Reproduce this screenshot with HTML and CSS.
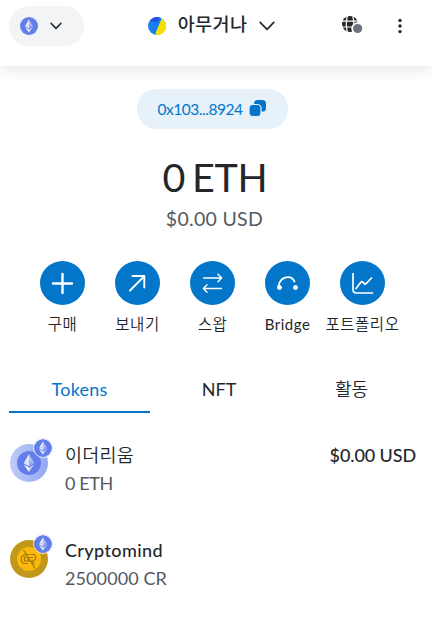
FILE: index.html
```html
<!DOCTYPE html>
<html lang="ko">
<head>
    <meta charset="UTF-8">
    <meta name="viewport" content="width=device-width, initial-scale=1.0">
    <title>Wallet</title>
    <link rel="stylesheet" href="styles.css">
</head>
<body>
    <!-- Shared ethereum logo -->
    <svg class="symbols" width="0" height="0">
        <symbol id="eth" viewBox="0 0 20 20">
            <circle cx="10" cy="10" r="10" fill="#627eea"/>
            <path d="M10 2.6 5.6 10.2 10 8.2z" fill="#fff" fill-opacity=".85"/>
            <path d="M10 2.6 14.4 10.2 10 8.2z" fill="#fff" fill-opacity=".5"/>
            <path d="M5.6 10.2 10 8.2v4.6z" fill="#fff" fill-opacity=".8"/>
            <path d="M14.4 10.2 10 8.2v4.6z" fill="#fff" fill-opacity=".35"/>
            <path d="M5.6 11.2 10 13.8v3.7z" fill="#fff" fill-opacity=".95"/>
            <path d="M14.4 11.2 10 13.8v3.7z" fill="#fff" fill-opacity=".6"/>
        </symbol>
    </svg>

    <header class="header">
        <button class="network">
            <svg width="18" height="18"><use href="#eth"/></svg>
            <svg width="12" height="8" viewBox="0 0 12 8" fill="none" stroke="#24272a" stroke-width="1.5" stroke-linecap="round" stroke-linejoin="round"><path d="M1 1.3 6 6.4 11 1.3"/></svg>
        </button>
        <button class="account">
            <svg width="18" height="18" viewBox="0 0 18 18">
                <circle cx="9" cy="9" r="9" fill="#1880f2"/>
                <path d="M1.5 4A9 9 0 0 1 12 .5L9.5 5.5z" fill="#2450e2"/>
                <path d="M13.8 1.4A9 9 0 0 1 8.5 17.99L7.5 16z" fill="#f5e000"/>
            </svg>
            <span class="account-name">아무거나</span>
            <svg width="16" height="10" viewBox="0 0 16 10" fill="none" stroke="#24272a" stroke-width="1.7" stroke-linecap="round" stroke-linejoin="round"><path d="M1.2 1.3 8 8.3l6.8-7"/></svg>
        </button>
        <div class="header-right">
            <svg width="21" height="18" viewBox="0 0 21 18">
                <circle cx="8" cy="8" r="8" fill="#24272a"/>
                <path d="M0 5.2h16M0 11h16M5.3 0Q3.3 8 5.3 16M10.8 0Q12.8 8 10.8 16" fill="none" stroke="#fff" stroke-width="1.2"/>
                <circle cx="15.6" cy="12.5" r="6.3" fill="#fff"/>
                <circle cx="15.6" cy="12.5" r="4.6" fill="#6a737d"/>
            </svg>
            <svg width="4" height="16" viewBox="0 0 4 16" fill="#24272a"><circle cx="2" cy="2.4" r="1.7"/><circle cx="2" cy="8" r="1.7"/><circle cx="2" cy="13.6" r="1.7"/></svg>
        </div>
    </header>

    <main class="main">
        <button class="address">
            <span>0x103...8924</span>
            <svg width="17" height="17" viewBox="0 0 17 17" fill="#0376c9">
                <rect x="5" y="0" width="12" height="11.5" rx="3.6"/>
                <rect x="0" y="4.5" width="12" height="12" rx="3.6" stroke="#e6f1fa" stroke-width="1.2"/>
            </svg>
        </button>

        <div class="balance">0 ETH</div>
        <div class="balance-usd">$0.00 USD</div>

        <div class="actions">
            <button class="action">
                <span class="action-icon"><svg width="45" height="44" viewBox="0 0 45 44"><path d="M22.5 13v19M13 22.5h19" stroke-width="2.4"/></svg></span>
                <span>구매</span>
            </button>
            <button class="action">
                <span class="action-icon"><svg width="45" height="44" viewBox="0 0 45 44"><path d="M15 29.5 29 15.5M17.5 15H29.3V26.5" stroke-width="1.9"/></svg></span>
                <span>보내기</span>
            </button>
            <button class="action">
                <span class="action-icon"><svg width="45" height="44" viewBox="0 0 45 44"><path d="M13.5 17h18M28 13.3l3.7 3.7-3.7 3.7M31.5 27.5h-18M17 23.8l-3.7 3.7 3.7 3.7" stroke-width="1.4"/></svg></span>
                <span>스왑</span>
            </button>
            <button class="action">
                <span class="action-icon"><svg width="45" height="44" viewBox="0 0 45 44"><path d="M13.500 25C15.500 14.500 26.500 14 29.500 20.500" stroke-width="1.8"/><circle cx="14.5" cy="26.5" r="2" fill="#fff"/><circle cx="30.5" cy="26.5" r="2" fill="#fff"/></svg></span>
                <span class="latin">Bridge</span>
            </button>
            <button class="action">
                <span class="action-icon"><svg width="45" height="44" viewBox="0 0 45 44"><path d="M13 12.5V28.5Q13 32 16.5 32H32.5M16 27.5l5-6.5q.8-.8 1.6 0l2 1.8q.8.7 1.5-.2L31.5 17" stroke-width="1.7"/></svg></span>
                <span>포트폴리오</span>
            </button>
        </div>

        <nav class="tabs">
            <button class="tab active">Tokens</button>
            <button class="tab">NFT</button>
            <button class="tab tab-korean">활동</button>
        </nav>

        <div class="token">
            <div class="token-icon token-eth">
                <svg width="24" height="24"><use href="#eth"/></svg>
                <svg class="badge" width="20" height="20"><use href="#eth"/></svg>
            </div>
            <div class="token-info">
                <div class="token-name">이더리움</div>
                <div class="token-amount amount-eth">0 ETH</div>
            </div>
            <div class="token-value">$0.00 USD</div>
        </div>

        <div class="token">
            <div class="token-icon token-cr">
                <svg width="38" height="38" viewBox="0 0 38 38">
                    <circle cx="19" cy="19" r="12" fill="#fbb90d"/>
                    <path d="M18 14.5h-3.5L11.5 17v4.500l2 2H18M17 17h-2.500v4H19M18.500 14.500H24l1.500 2v2.500l-2 2H18v-3.500h5M21 21l3.500 3M13.500 10 25 28.500" fill="none" stroke="#a87a0a" stroke-width="1.2"/>
                </svg>
                <svg class="badge" width="20" height="20"><use href="#eth"/></svg>
            </div>
            <div class="token-info">
                <div class="token-name name-cr">Cryptomind</div>
                <div class="token-amount">2500000 CR</div>
            </div>
        </div>
    </main>
</body>
</html>
```

FILE: styles.css
```css
* {
    margin: 0;
    padding: 0;
    box-sizing: border-box;
}

body {
    font-family: Lato, "Noto Sans CJK KR", sans-serif;
    background: #fff;
    color: #24272a;
    height: 620px;
    overflow: hidden;
}

button {
    font: inherit;
    color: inherit;
    background: none;
    border: none;
    cursor: pointer;
}

svg {
    display: block;
    flex-shrink: 0;
}

.symbols {
    display: none;
}

/* Header */
.header {
    height: 66px;
    padding: 6px 30px 20px 9px;
    display: grid;
    grid-template-columns: 75px 1fr 60px;
    box-shadow: 0 2px 16px rgba(0, 0, 0, 0.12);
}

.network {
    height: 40px;
    border-radius: 20px;
    background: #f2f4f6;
    display: flex;
    align-items: center;
    gap: 12px;
    padding-left: 11px;
}

.account {
    display: flex;
    align-items: center;
    padding-left: 64px;
}

.account-name {
    font-size: 18.5px;
    font-weight: 500;
    line-height: 24px;
    white-space: nowrap;
    width: 71px;
    margin: 0 11px 4px 11px;
    letter-spacing: 0.4px;
}

.header-right {
    display: flex;
    align-items: center;
    justify-content: space-between;
}

.header-right svg:first-child {
    margin-bottom: 3px;
}

/* Balance */
.main {
    padding: 23px 16px 0 9px;
    display: flex;
    flex-direction: column;
}

.address {
    width: 151px;
    height: 40px;
    margin-left: 128px;
    border-radius: 20px;
    background: #e6f1fa;
    color: #0376c9;
    font-size: 15.5px;
    display: flex;
    align-items: center;
    gap: 6px;
    padding: 0 0 1px 20px;
}

.address span {
    width: 86px;
    letter-spacing: -0.45px;
}

.balance {
    margin: 24px 0 0 5px;
    font-size: 39.5px;
    line-height: 48px;
    text-align: center;
    letter-spacing: -0.3px;
    word-spacing: -3px;
}

.balance-usd {
    margin: 6px 0 0 4px;
    font-size: 19.5px;
    line-height: 24px;
    text-align: center;
    letter-spacing: 0.3px;
    color: #535a61;
}

/* Action buttons */
.actions {
    display: grid;
    grid-template-columns: repeat(5, 75px);
    margin: 30px 0 0 16px;
}

.action {
    display: flex;
    flex-direction: column;
    align-items: center;
    gap: 8px;
    font-size: 15.5px;
    line-height: 22px;
    font-weight: 350;
    letter-spacing: 0.5px;
    white-space: nowrap;
}

.action .latin {
    font-size: 15px;
    font-weight: 400;
}

.action-icon {
    width: 45px;
    height: 44px;
    border-radius: 50%;
    background: #0376c9;
}

.action-icon svg {
    fill: none;
    stroke: #fff;
    stroke-linecap: round;
    stroke-linejoin: round;
}

/* Tabs */
.tabs {
    display: grid;
    grid-template-columns: 141px 138px 127px;
    margin-top: 32px;
}

.tab {
    height: 46px;
    font-size: 18px;
    line-height: 44px;
    border-bottom: 2px solid transparent;
}

.tab.active {
    color: #0376c9;
    border-color: #0376c9;
    letter-spacing: 0.2px;
}

.tab-korean {
    font-weight: 350;
}

/* Token list */
.token {
    height: 96px;
    padding-top: 28px;
    display: flex;
}

.token-icon {
    position: relative;
    width: 38px;
    height: 38px;
    margin: 3px 17px 0 1px;
    border-radius: 50%;
    display: flex;
    align-items: center;
    justify-content: center;
}

.token-eth {
    background: linear-gradient(90deg, #c0cbf7, #93a7f1);
}

.token-cr {
    background: #c2981b;
}

.badge {
    position: absolute;
    top: -6px;
    right: -5px;
    border: 1px solid #e4e8f5;
    border-radius: 50%;
}

.token-info {
    flex: 1;
}

.token-name {
    font-size: 18.5px;
    font-weight: 350;
    line-height: 28px;
    letter-spacing: 0.2px;
}

.name-cr {
    font-size: 18px;
    font-weight: 500;
    line-height: 27px;
    letter-spacing: 0.4px;
}

.token-amount {
    font-size: 18px;
    line-height: 28px;
    letter-spacing: 0.1px;
    color: #535a61;
}

.amount-eth {
    letter-spacing: -0.4px;
}

.token-value {
    font-size: 18px;
    font-weight: 500;
    line-height: 28px;
    letter-spacing: -0.1px;
}
```
